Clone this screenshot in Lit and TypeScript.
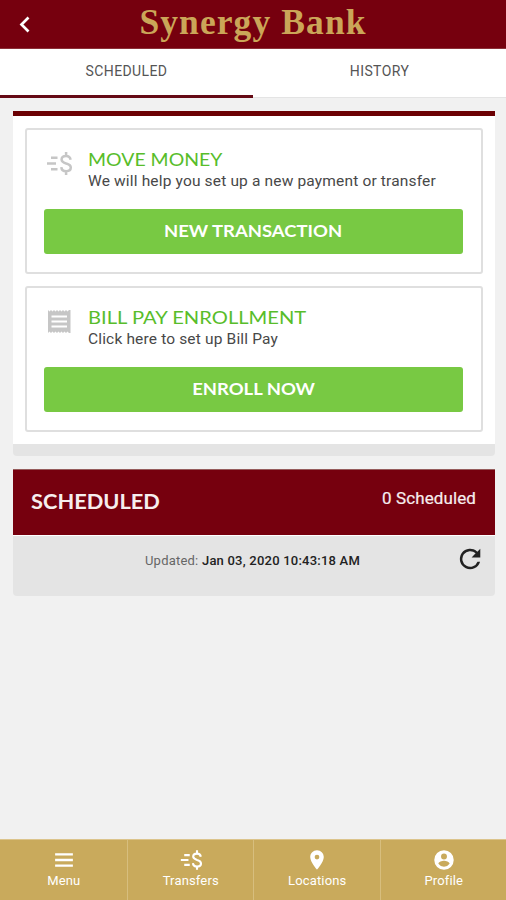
import { LitElement, html, css, svg } from "lit";
import { customElement } from "lit/decorators.js";

const moneyIcon = svg`
  <g fill="none" stroke="currentColor" stroke-width="2.5">
    <path d="M5 6.2h6.500M1 12h9M5 17.8h6.500"/>
    <path d="M24.600 8.200C24.2 5.700 22.600 4.400 20.100 4.400c-2.800 0-4.500 1.400-4.500 3.600 0 2.400 2 3.200 4.600 4 2.900.8 4.600 1.800 4.600 4.100 0 2.300-2 3.600-4.600 3.600-2.900 0-4.700-1.500-4.900-4.100M20.100.4v4M20.100 19.600v4"/>
  </g>`;

@customElement("app-root")
export class AppRoot extends LitElement {
  static styles = css`
    :host {
      display: flex;
      flex-direction: column;
      height: 900px;
      width: 506px;
      overflow: hidden;
      background: #f1f1f1;
      color: #3c3c3c;
      font-family: Roboto, sans-serif;
      white-space: nowrap;
    }
    * { box-sizing: border-box; }
    svg { display: block; flex: none; }
    .top {
      height: 49px;
      flex: none;
      display: grid;
      grid-template-columns: 40px 1fr 40px;
      background: #76000e;
      border-bottom: 1px solid #8c3038;
      color: #fff;
    }
    .back { margin: 16px 0 0 19px; }
    .brand {
      justify-self: center;
      font: bold 35.5px/44px "Liberation Serif", serif;
      letter-spacing: 1.1px;
      color: #cba658;
    }
    .tabs {
      display: grid;
      grid-template-columns: 1fr 1fr;
      height: 49px;
      flex: none;
      background: #fff;
      border-bottom: 1px solid #e4e4e4;
    }
    .tab {
      height: 49px;
      text-align: center;
      font-size: 14px;
      letter-spacing: 0.4px;
      line-height: 45px;
      color: #555;
    }
    .active { border-bottom: 3px solid #650a15; }
    .content {
      flex: 1;
      padding: 13px 11px 0 13px;
    }
    .panel {
      height: 345px;
      background: #fff;
      border-top: 5px solid #6b0003;
      border-bottom: 12px solid #e4e4e4;
      border-radius: 0 0 4px 4px;
      padding: 12px 12px 0;
      display: flex;
      flex-direction: column;
      gap: 12px;
    }
    .box {
      height: 146px;
      border: 2px solid #dfdfdf;
      border-radius: 3px;
      padding: 18px 17px 0;
    }
    .info { display: flex; height: 61px; }
    .glyph { width: 44px; padding-top: 1px; color: #c6c6c6; flex: none; }
    .heading {
      font: 18px/22px Lato, sans-serif;
      color: #58bd2a;
      transform-origin: left;
      width: max-content;
    }
    .move { transform: scaleX(1.08); }
    .bill { transform: scaleX(1.12); }
    .note { font-size: 15.5px; letter-spacing: 0.16px; line-height: 22px; color: #484848; }
    .button {
      display: flex;
      justify-content: center;
      width: 419px;
      height: 45px;
      border: 0;
      padding: 0;
      border-radius: 3px;
      background: #78c943;
      color: #fff;
      font: bold 17px/44px Lato, sans-serif;
    }
    .stretch { transform: scaleX(1.085); }
    .summary {
      margin-top: 13px;
      height: 66px;
      padding: 0 19px 0 18px;
      display: flex;
      justify-content: space-between;
      background: #76000e;
      border-top: 1px solid #955b5b;
      color: #f6eeee;
    }
    .section {
      font: bold 20px/62px Lato, sans-serif;
      transform-origin: left;
      transform: scaleX(1.09);
    }
    .count { font-size: 17px; line-height: 56px; letter-spacing: 0.1px; -webkit-text-stroke: 0.2px; }
    .status {
      height: 61px;
      display: grid;
      grid-template-columns: 40px 1fr 26px;
      padding: 0 12px 0 0;
      border-top: 1px solid #fff;
      border-radius: 0 0 4px 4px;
      background: #e4e4e4;
    }
    .updated { padding-right: 5px; text-align: center; font-size: 13px; letter-spacing: 0.22px; line-height: 49px; color: #666; }
    .date { color: #222; font-weight: 500; }
    .refresh { margin-top: 10px; color: #222; }
    .nav {
      height: 61px;
      flex: none;
      display: grid;
      grid-template-columns: repeat(4, 1fr);
      background: #c9aa5c;
      border-top: 1px solid #dcc48c;
      color: #fff;
    }
    .item {
      display: flex;
      flex-direction: column;
      align-items: center;
      padding: 9px 0 0 1px;
      font-size: 13px;
      letter-spacing: 0.15px;
      line-height: 20px;
    }
    .item + .item { border-left: 1px solid #d7be7e; }
  `;

  render() {
    const items = [
      { name: "Menu", view: "-1 -1 26 26", shape: svg`<path d="M1.500 4h21v2.800h-21zM1.500 10.600h21v2.800h-21zM1.500 17.200h21V20h-21z"/>` },
      { name: "Transfers", view: "0 -1 26 26", shape: moneyIcon },
      { name: "Locations", view: "-1 -1 26 26", shape: svg`<path d="M12 .5C7.500.5 4 4 4 8.500c0 6 8 15 8 15s8-9 8-15c0-4.500-3.500-8-8-8zm0 10.800a2.800 2.800 0 1 1 0-5.600 2.800 2.800 0 0 1 0 5.600z"/>` },
      { name: "Profile", view: "-1 -1 26 26", shape: svg`<path fill-rule="evenodd" d="M12 .5a11.500 11.500 0 1 0 0 23 11.500 11.500 0 0 0 0-23zm0 3.800a3.500 3.500 0 1 1 0 7 3.500 3.500 0 0 1 0-7zM12 19.900a8 8 0 0 1-6.600-3.500c0-2.200 4.400-3.400 6.600-3.400s6.600 1.200 6.600 3.400A8 8 0 0 1 12 19.900z"/>` },
    ];
    return html`
      <header class="top">
        <svg class="back" width="12" height="17" viewBox="0 0 12 17" fill="none" stroke="currentColor" stroke-width="2.7"><path d="M9.500 1.500 2.500 8.500l7 7"/></svg>
        <div class="brand">Synergy Bank</div>
      </header>
      <nav class="tabs">
        <div class="tab active">SCHEDULED</div>
        <div class="tab">HISTORY</div>
      </nav>
      <main class="content">
        <section class="panel">
          <div class="box">
            <div class="info">
              <div class="glyph"><svg width="29" height="27" viewBox="-2 -2.500 29 27">${moneyIcon}</svg></div>
              <div>
                <div class="heading move">MOVE MONEY</div>
                <div class="note">We will help you set up a new payment or transfer</div>
              </div>
            </div>
            <button class="button"><span class="stretch">NEW TRANSACTION</span></button>
          </div>
          <div class="box">
            <div class="info">
              <div class="glyph"><svg width="29" height="27" viewBox="0 0 29 27">
                <path fill="currentColor" d="M4 3l1.500 1.500L7 3l1.500 1.500L10 3l1.500 1.500L13 3l1.500 1.500L16 3l1.500 1.500L19 3l1.500 1.500L22 3l1.500 1.500L25 3h1.500v23H25l-1.500-1.500L22 26l-1.500-1.500L19 26l-1.500-1.500L16 26l-1.500-1.500L13 26l-1.500-1.500L10 26l-1.500-1.500L7 26l-1.500-1.500L4 26z"/>
                <path stroke="#fff" stroke-width="2" d="M7.500 9.500h15.500M7.500 14.500h15.500M7.500 19.500h15.500"/></svg></div>
              <div>
                <div class="heading bill">BILL PAY ENROLLMENT</div>
                <div class="note">Click here to set up Bill Pay</div>
              </div>
            </div>
            <button class="button"><span class="stretch">ENROLL NOW</span></button>
          </div>
        </section>
        <section class="summary">
          <div class="section">SCHEDULED</div>
          <div class="count">0 Scheduled</div>
        </section>
        <div class="status">
          <span></span>
          <div class="updated">Updated: <span class="date">Jan 03, 2020 10:43:18 AM</span></div>
          <div class="refresh"><svg width="26" height="26" viewBox="0 0 24 24" fill="currentColor"><path d="M18.800 5.200A9.500 9.500 0 1 0 21.300 14.500H18.900A7.200 7.200 0 1 1 17.200 6.800L13.500 10.500H21.500V2.500z"/></svg></div>
        </div>
      </main>
      <nav class="nav">
        ${items.map((i) => html`<div class="item"><svg width="22" height="22" viewBox=${i.view} fill="currentColor">${i.shape}</svg><span>${i.name}</span></div>`)}
      </nav>`;
  }
}
